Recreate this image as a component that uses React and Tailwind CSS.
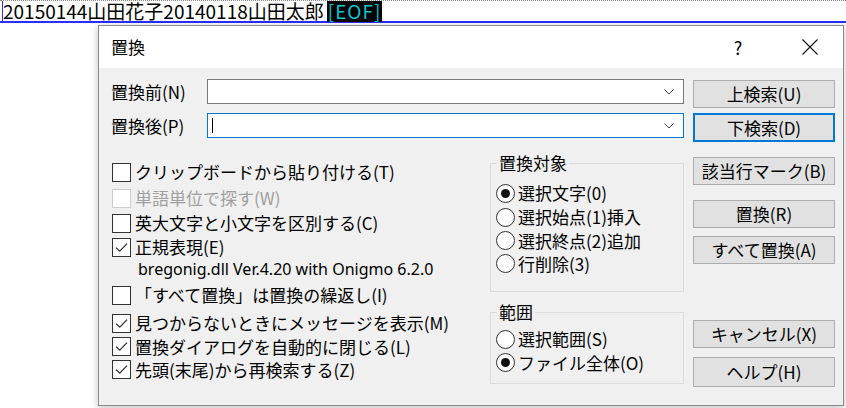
import React from "react";

const jp = "font-['Noto_Sans_CJK_JP',sans-serif]";

function CheckRow({ checked, disabled, children, className = "" }) {
  return (
    <div className={`flex items-center ${className}`}>
      <span
        className={`flex h-[19px] w-[19px] shrink-0 items-center justify-center border bg-white ${
          disabled ? "border-[#cccccc]" : "border-[#333333]"
        }`}
      >
        {checked && (
          <svg width="15" height="15" viewBox="0 0 15 15">
            <path d="M2 7.6 L5.8 11.2 L13 3.6" fill="none" stroke="#333" strokeWidth="1.3" />
          </svg>
        )}
      </span>
      <span className={`ml-[4px] whitespace-nowrap ${disabled ? "text-[#a0a0a0]" : "text-black"}`}>
        {children}
      </span>
    </div>
  );
}

function RadioRow({ checked, children, className = "" }) {
  return (
    <div className={`flex items-center ${className}`}>
      <span className="flex h-[19px] w-[19px] shrink-0 items-center justify-center rounded-full border border-[#333333] bg-white">
        {checked && <span className="h-[9px] w-[9px] rounded-full bg-[#111111]" />}
      </span>
      <span className="ml-[3px] whitespace-nowrap">{children}</span>
    </div>
  );
}

function Btn({ children, primary, className = "" }) {
  return (
    <button
      className={`flex w-[142px] items-center justify-center bg-[#e1e1e1] ${
        primary ? "border-2 border-[#0078d7]" : "border border-[#adadad]"
      } ${className}`}
    >
      {children}
    </button>
  );
}

function Combo({ focused, caret }) {
  return (
    <div
      className={`flex h-[25px] w-[477px] items-center bg-white border ${
        focused ? "border-[#0078d7]" : "border-[#7a7a7a]"
      }`}
    >
      <div className="flex-1 pl-[4px]">
        {caret && <div className="h-[15px] w-[1px] bg-black" />}
      </div>
      <svg className="mr-[9px]" width="10" height="6" viewBox="0 0 10 6">
        <path d="M0.5 0.5 L5 5 L9.5 0.5" fill="none" stroke="#444" strokeWidth="1" />
      </svg>
    </div>
  );
}

export default function App() {
  return (
    <div className={`relative h-[408px] w-[846px] overflow-hidden bg-white ${jp}`}>
      {/* Editor line */}
      <div className="h-[1px] w-full border-t border-dotted border-[#888888]" />
      <div className="flex h-[22px] items-center border-b-2 border-[#2c2cff]">
        <div className="h-[20px] w-[1px] bg-[#2c2cff] ml-[2px]" />
        <span className="text-[19px] leading-[22px] text-black whitespace-nowrap">
          20150144山田花子20140118山田太郎
        </span>
        <span className="ml-[3px] flex h-[21px] items-center bg-black px-[1px] text-[#00c8d0] text-[19px] leading-[22px] tracking-[1px] whitespace-nowrap">
          [EOF]
        </span>
      </div>

      {/* Replace dialog */}
      <div className="absolute left-[98px] top-[25px] w-[746px] h-[381px] border border-[#8a8a8a] bg-[#f0f0f0] shadow-[0_2px_8px_rgba(0,0,0,0.25)] text-[17px] text-black">
        {/* Title bar */}
        <div className="flex h-[42px] items-center bg-white">
          <span className="ml-[12px]">置換</span>
          <span className="ml-auto flex w-[30px] justify-center text-[18px]">?</span>
          <span className="ml-[42px] mr-[18px] flex w-[30px] justify-center">
            <svg width="16" height="16" viewBox="0 0 16 16">
              <path d="M0.5 0.5 L15.5 15.5 M15.5 0.5 L0.5 15.5" stroke="#111" strokeWidth="1.1" />
            </svg>
          </span>
        </div>

        {/* Client area */}
        <div className="flex leading-[22px]">
          <div className="ml-[12px] w-[574px]">
            <div className="mt-[11px] flex items-center">
              <span className="w-[96px]">置換前(N)</span>
              <Combo />
            </div>
            <div className="mt-[9px] flex items-center">
              <span className="w-[96px]">置換後(P)</span>
              <Combo focused caret />
            </div>

            <div className="flex">
              {/* Options */}
              <div className="ml-[1px] w-[378px]">
                <CheckRow className="mt-[22px] h-[24px]">クリップボードから貼り付ける(T)</CheckRow>
                <CheckRow disabled className="mt-[2px] h-[24px]">単語単位で探す(W)</CheckRow>
                <CheckRow className="mt-[1px] h-[24px]">英大文字と小文字を区別する(C)</CheckRow>
                <CheckRow checked className="h-[24px]">正規表現(E)</CheckRow>
                <div className="flex h-[20px] items-center pl-[26px] text-[16px] font-['Noto_Sans',sans-serif] whitespace-nowrap">
                  bregonig.dll Ver.4.20 with Onigmo 6.2.0
                </div>
                <CheckRow className="mt-[4px] h-[24px]">「すべて置換」は置換の繰返し(I)</CheckRow>
                <CheckRow checked className="mt-[4px] h-[24px]">見つからないときにメッセージを表示(M)</CheckRow>
                <CheckRow checked className="h-[23px]">置換ダイアログを自動的に閉じる(L)</CheckRow>
                <CheckRow checked className="h-[23px]">先頭(末尾)から再検索する(Z)</CheckRow>
              </div>

              {/* Groups */}
              <div className="w-[194px]">
                <fieldset className="mt-[14px] border border-[#dcdcdc] pl-[5px] pb-[16px]">
                  <legend className="ml-[1px] px-[2px] leading-[22px]">置換対象</legend>
                  <RadioRow checked className="mt-[7px] h-[24px]">選択文字(0)</RadioRow>
                  <RadioRow className="h-[24px]">選択始点(1)挿入</RadioRow>
                  <RadioRow className="h-[23px]">選択終点(2)追加</RadioRow>
                  <RadioRow className="h-[23px]">行削除(3)</RadioRow>
                </fieldset>
                <fieldset className="mt-[9px] border border-[#dcdcdc] pl-[5px] pb-[9px]">
                  <legend className="ml-[1px] px-[2px] leading-[22px]">範囲</legend>
                  <RadioRow className="mt-[4px] h-[24px]">選択範囲(S)</RadioRow>
                  <RadioRow checked className="h-[23px]">ファイル全体(O)</RadioRow>
                </fieldset>
              </div>
            </div>
          </div>

          {/* Buttons */}
          <div className="ml-[8px] flex flex-col">
            <Btn className="mt-[12px] h-[28px]">上検索(U)</Btn>
            <Btn primary className="mt-[5px] h-[29px]">下検索(D)</Btn>
            <Btn className="mt-[15px] h-[28px]">該当行マーク(B)</Btn>
            <Btn className="mt-[15px] h-[28px]">置換(R)</Btn>
            <Btn className="mt-[8px] h-[28px]">すべて置換(A)</Btn>
            <Btn className="mt-[56px] h-[28px]">キャンセル(X)</Btn>
            <Btn className="mt-[9px] h-[30px]">ヘルプ(H)</Btn>
          </div>
        </div>
      </div>
    </div>
  );
}
